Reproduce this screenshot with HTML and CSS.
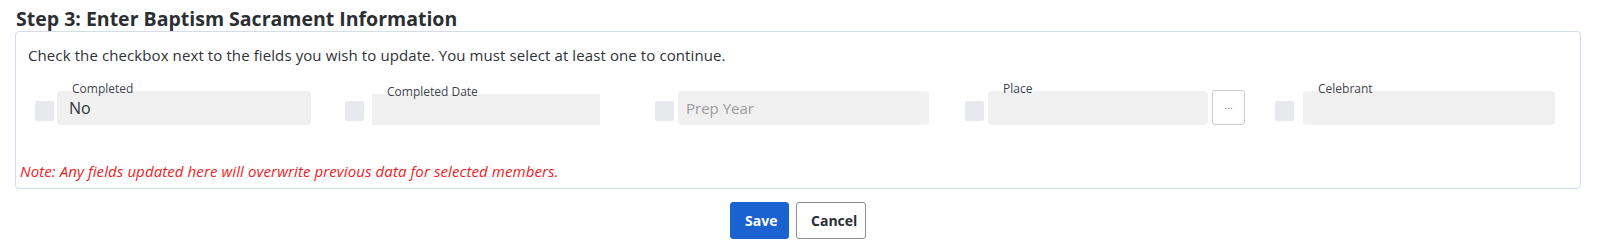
FILE: index.html
```html
<!DOCTYPE html>
<html lang="en">
<head>
    <meta charset="UTF-8">
    <meta name="viewport" content="width=device-width, initial-scale=1.0">
    <title>Baptism Sacrament - Step 3</title>
    <link rel="stylesheet" href="styles.css">
</head>
<body>

<div class="page">
    <h3 class="step-title">Step 3: Enter Baptism Sacrament Information</h3>

    <div class="panel">
        <p class="hint">Check the checkbox next to the fields you wish to update. You must select at least one to continue.</p>

        <div class="fields">
            <div class="field-col">
                <span class="check"></span>
                <div class="field field-completed">
                    <span class="float-label">Completed</span>
                    <div class="input">No</div>
                </div>
            </div>

            <div class="field-col">
                <span class="check"></span>
                <div class="field field-date">
                    <span class="float-label">Completed Date</span>
                    <div class="input square"></div>
                </div>
            </div>

            <div class="field-col">
                <span class="check"></span>
                <div class="field field-prep">
                    <div class="input placeholder">Prep Year</div>
                </div>
            </div>

            <div class="field-col">
                <span class="check"></span>
                <div class="field field-place">
                    <span class="float-label">Place</span>
                    <div class="input"></div>
                </div>
                <button class="lookup">...</button>
            </div>

            <div class="field-col">
                <span class="check"></span>
                <div class="field field-celebrant">
                    <span class="float-label">Celebrant</span>
                    <div class="input"></div>
                </div>
            </div>
        </div>

        <p class="note">Note: Any fields updated here will overwrite previous data for selected members.</p>
    </div>

    <div class="actions">
        <button class="btn btn-save">Save</button>
        <button class="btn btn-cancel">Cancel</button>
    </div>
</div>

</body>
</html>
```

FILE: styles.css
```css
body {
    margin: 0;
    font-family: "Open Sans", Arial, sans-serif;
    color: #2f3237;
    background-color: #fff;
}
.page {
    padding: 0 17px 0 15px;
}
.step-title {
    margin: 0;
    padding: 7px 0 0 1px;
    font-family: "Open Sans", Arial, sans-serif;
    font-size: 19.5px;
    font-weight: 700;
    line-height: 24px;
    color: #2b2e33;
}
.panel {
    border: 1px solid #d3dce8;
    border-radius: 4px;
    height: 156px;
}
.hint {
    margin: 0;
    padding: 13px 0 0 12px;
    font-size: 15px;
    letter-spacing: 0.1px;
    line-height: 20px;
}
.fields {
    display: grid;
    grid-template-columns: repeat(5, 310px);
    margin: 7px 0 0 4px;
}
.field-col {
    display: flex;
    align-items: flex-end;
    padding-top: 18px;
}
.check {
    width: 19px;
    height: 20px;
    margin: 0 0 4px 15px;
    background-color: #e8e9ec;
    border-radius: 2px;
    flex-shrink: 0;
}
.field {
    position: relative;
}
.field-completed { margin-left: 3px; width: 254px; }
.field-date { margin-left: 8px; width: 228px; }
.field-prep { margin-left: 4px; width: 251px; }
.field-place { margin-left: 4px; width: 220px; }
.field-celebrant { margin-left: 9px; width: 252px; }
.input {
    height: 34px;
    padding: 0 12px;
    background-color: #f0f0f0;
    border-radius: 4px;
    font-size: 16px;
    line-height: 34px;
    color: #2f3237;
}
.input.square {
    border-radius: 0;
    height: 31px;
}
.input.placeholder {
    padding-left: 8px;
    font-size: 15px;
    color: #9b9b9b;
}
.float-label {
    position: absolute;
    left: 15px;
    top: -9px;
    font-size: 12px;
    line-height: 14px;
    color: #3d434c;
}
.lookup {
    width: 33px;
    height: 35px;
    margin-left: 4px;
    padding: 0 0 4px;
    background-color: #fff;
    border: 1px solid #c9ccd1;
    border-radius: 3px;
    font-size: 10px;
    color: #666;
}
.note {
    margin: 36px 0 0;
    padding-left: 4px;
    font-size: 15px;
    letter-spacing: 0.1px;
    line-height: 20px;
    font-style: italic;
    color: #ee1c25;
}
.actions {
    display: flex;
    justify-content: center;
    gap: 7px;
    margin-top: 13px;
}
.btn {
    height: 37px;
    padding: 0 14px;
    font-family: "Open Sans", Arial, sans-serif;
    font-size: 14px;
    font-weight: 700;
    border-radius: 3px;
    cursor: pointer;
}
.btn-save {
    width: 59px;
    background-color: #1a62d0;
    border: 1px solid #1a62d0;
    color: #fff;
}
.btn-cancel {
    width: 70px;
    background-color: #fff;
    border: 1px solid #8a8e99;
    color: #2b2e33;
}
```
